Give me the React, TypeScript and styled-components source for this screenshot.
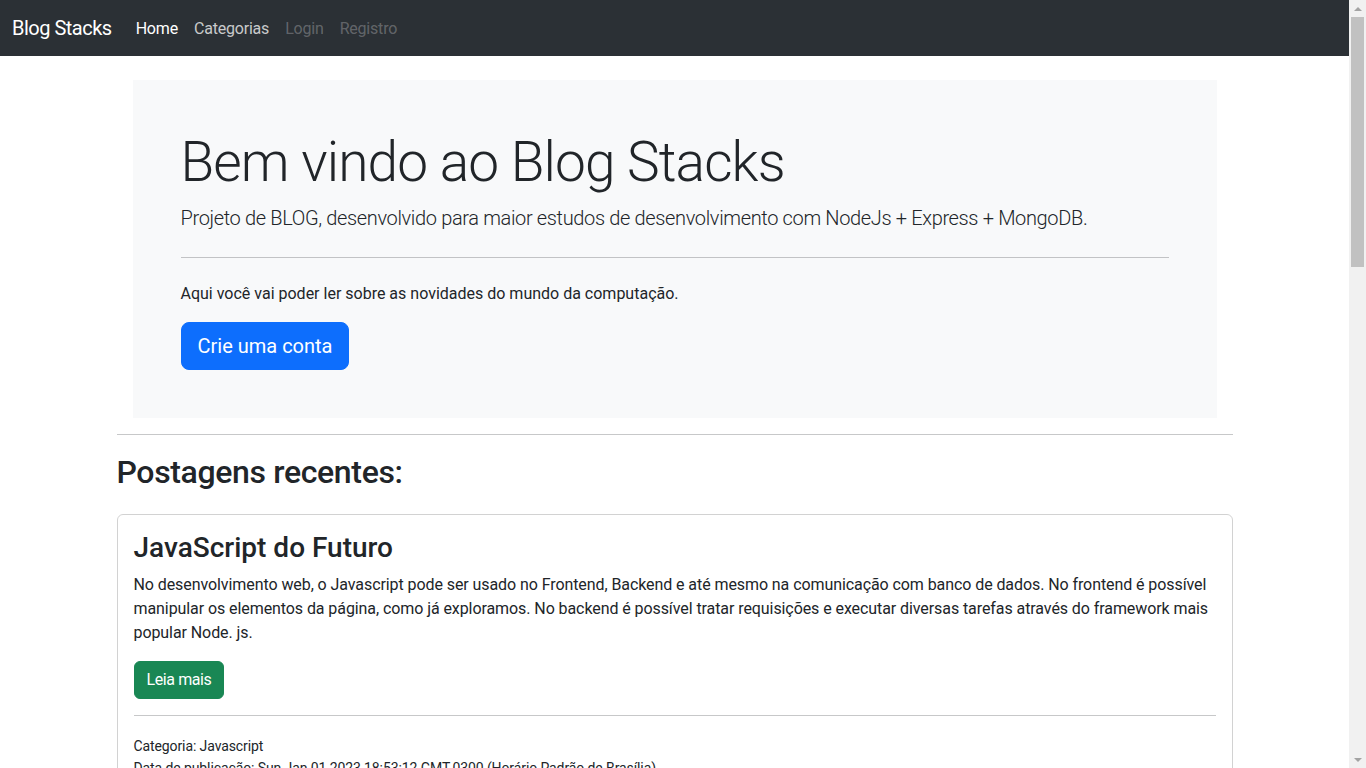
import styled, { createGlobalStyle } from "styled-components"

const GlobalStyle = createGlobalStyle`
  body {
    margin: 0 17px 0 0;
    font-family: "Segoe UI", Roboto, "Noto Sans", sans-serif;
    font-size: 16px;
    line-height: 1.5;
    color: #212529;
    background: #fff;
  }
  * {
    box-sizing: border-box;
  }
`

// the reference shows the native scrollbar, headless hides it, so draw one
const ScrollTrack = styled.div`
  position: fixed;
  top: 0;
  right: 0;
  width: 17px;
  height: 100vh;
  background: #f1f1f1;
  display: flex;
  flex-direction: column;
  align-items: center;
`

const ScrollArrow = styled.div<{ $down?: boolean }>`
  height: 17px;
  width: 17px;
  display: flex;
  align-items: center;
  justify-content: center;
  ${({ $down }) => $down && "margin-top: auto;"}

  &::after {
    content: "";
    border-left: 4px solid transparent;
    border-right: 4px solid transparent;
    ${({ $down }) =>
      $down ? "border-top: 4px solid #a3a3a3;" : "border-bottom: 4px solid #a3a3a3;"}
  }
`

const ScrollThumb = styled.div`
  width: 13px;
  height: 250px;
  background: #c1c1c1;
`

const Navbar = styled.nav`
  height: 56px;
  background: #2b3035;
  display: flex;
  align-items: center;
  padding: 0 12px;
`

const Brand = styled.a`
  font-size: 20px;
  letter-spacing: -0.5px;
  color: #fff;
  margin-right: 16px;
  text-decoration: none;
`

const NavList = styled.div`
  display: flex;
  padding-top: 2px;
`

const NavLink = styled.a<{ $state: "active" | "normal" | "disabled" }>`
  padding: 8px;
  letter-spacing: -0.2px;
  text-decoration: none;
  color: ${({ $state }) => {
    switch ($state) {
      case "active":
        return "#fff"
      case "disabled":
        return "rgba(255, 255, 255, 0.27)"
      default:
        return "rgba(255, 255, 255, 0.75)"
    }
  }};
`

const Container = styled.main`
  max-width: 1140px;
  margin: 0 auto;
  padding: 0 12px 40px;
`

const Jumbotron = styled.section`
  margin: 24px 16px 0;
  padding: 48px;
  background: #f8f9fa;
`

const Display = styled.h1`
  font-size: 55px;
  font-weight: 300;
  letter-spacing: -0.9px;
  line-height: 1.2;
  margin: 0 0 8px;
  padding-top: 1px;
`

const Lead = styled.p`
  font-size: 20px;
  font-weight: 300;
  letter-spacing: -0.35px;
  margin: 0;
`

const Rule = styled.hr<{ $space?: number }>`
  border: 0;
  border-top: 1px solid #212529;
  opacity: 0.25;
  margin: ${({ $space }) => $space ?? 16}px 0;
`

const Text = styled.p<{ $tight?: boolean }>`
  margin: 0 0 16px;
  ${({ $tight }) => $tight && "letter-spacing: -0.08px;"}
`

const Button = styled.a<{ $variant: "primary" | "success"; $large?: boolean }>`
  display: inline-block;
  color: #fff;
  text-decoration: none;
  background: ${({ $variant }) => ($variant === "primary" ? "#0d6efd" : "#198754")};
  border: 1px solid ${({ $variant }) => ($variant === "primary" ? "#0d6efd" : "#198754")};
  font-size: ${({ $large }) => ($large ? 20 : 16)}px;
  letter-spacing: ${({ $large }) => ($large ? 0 : -0.4)}px;
  padding: ${({ $large }) => ($large ? "8px 16px" : "6px 12px")};
  border-radius: ${({ $large }) => ($large ? 8 : 6)}px;
  line-height: 1.5;
`

const SectionTitle = styled.h2`
  font-size: 32px;
  font-weight: 500;
  letter-spacing: -0.35px;
  line-height: 1.2;
  margin: 0 0 8px;
  padding-top: 2px;
`

const Card = styled.article`
  margin-top: 23px;
  border: 1px solid rgba(0, 0, 0, 0.175);
  border-radius: 6px;
  padding: 16px;
`

const CardTitle = styled.h3`
  font-size: 28px;
  font-weight: 500;
  line-height: 1.2;
  margin: 0 0 8px;
`

const MetaBlock = styled.div`
  padding-top: 3px;
`

const Meta = styled.small`
  display: block;
  font-size: 14px;
  letter-spacing: -0.1px;
  line-height: 22px;
`

export default function App() {
  return (
    <>
      <GlobalStyle />
      <Navbar>
        <Brand href="#">Blog Stacks</Brand>
        <NavList>
          <NavLink $state="active" href="#">Home</NavLink>
          <NavLink $state="normal" href="#">Categorias</NavLink>
          <NavLink $state="disabled" href="#">Login</NavLink>
          <NavLink $state="disabled" href="#">Registro</NavLink>
        </NavList>
      </Navbar>

      <Container>
        <Jumbotron>
          <Display>Bem vindo ao Blog Stacks</Display>
          <Lead>
            Projeto de BLOG, desenvolvido para maior estudos de desenvolvimento com NodeJs + Express + MongoDB.
          </Lead>
          <Rule $space={24} />
          <Text>Aqui você vai poder ler sobre as novidades do mundo da computação.</Text>
          <Button $variant="primary" $large href="#">Crie uma conta</Button>
        </Jumbotron>

        <Rule />
        <SectionTitle>Postagens recentes:</SectionTitle>

        <Card>
          <CardTitle>JavaScript do Futuro</CardTitle>
          <Text $tight>
            No desenvolvimento web, o Javascript pode ser usado no Frontend, Backend e até mesmo na comunicação com
            banco de dados. No frontend é possível manipular os elementos da página, como já exploramos. No backend é
            possível tratar requisições e executar diversas tarefas através do framework mais popular Node. js.
          </Text>
          <Button $variant="success" href="#">Leia mais</Button>
          <Rule />
          <MetaBlock>
            <Meta>Categoria: Javascript</Meta>
            <Meta>Data de publicação: Sun Jan 01 2023 18:53:12 GMT-0300 (Horário Padrão de Brasília)</Meta>
          </MetaBlock>
        </Card>
      </Container>

      <ScrollTrack>
        <ScrollArrow />
        <ScrollThumb />
        <ScrollArrow $down />
      </ScrollTrack>
    </>
  )
}
